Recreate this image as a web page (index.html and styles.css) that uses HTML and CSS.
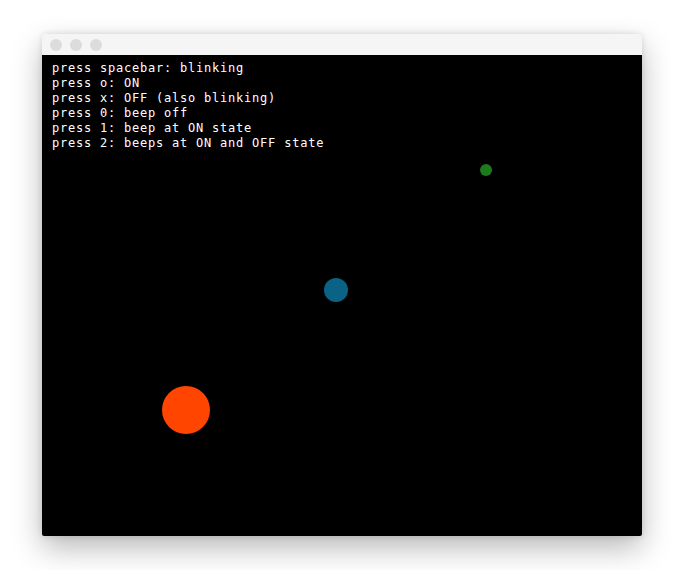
FILE: index.html
```html
<!DOCTYPE html>
<html>
<head>
<meta charset="utf-8">
<link rel="stylesheet" href="styles.css">
</head>
<body>
<div class="window">
  <div class="titlebar">
    <span class="dot"></span><span class="dot"></span><span class="dot"></span>
  </div>
  <div class="canvas">
    <div class="help">
      <div>press spacebar: blinking</div>
      <div>press o: ON</div>
      <div>press x: OFF (also blinking)</div>
      <div>press 0: beep off</div>
      <div>press 1: beep at ON state</div>
      <div>press 2: beeps at ON and OFF state</div>
    </div>
    <span class="ball ball-orange"></span>
    <span class="ball ball-blue"></span>
    <span class="ball ball-green"></span>
  </div>
</div>
</body>
</html>
```
FILE: styles.css
```css
html, body {
  margin: 0;
  background: #ffffff;
}
body {
  padding: 34px 42px;
}
.window {
  width: 600px;
  border-radius: 5px 5px 2px 2px;
  overflow: hidden;
  box-shadow: 0 12px 30px rgba(0, 0, 0, 0.28), 0 0 6px rgba(0, 0, 0, 0.12);
}
.titlebar {
  height: 21px;
  background: #f5f5f5;
  display: flex;
  align-items: center;
  gap: 8px;
  padding-left: 8px;
  box-sizing: border-box;
}
.dot {
  width: 12px;
  height: 12px;
  border-radius: 50%;
  background: #dcdcdc;
}
.canvas {
  position: relative;
  height: 481px;
  background: #000;
}
.help {
  padding: 6px 0 0 10px;
  color: #fff;
  font-family: "DejaVu Sans Mono", "Liberation Mono", monospace;
  font-size: 12px;
  letter-spacing: 0.78px;
  line-height: 15px;
}
.ball {
  position: absolute;
  border-radius: 50%;
}
.ball-orange {
  left: 120px;
  top: 331px;
  width: 48px;
  height: 48px;
  background: #ff4500;
}
.ball-blue {
  left: 282px;
  top: 223px;
  width: 24px;
  height: 24px;
  background: #0a6384;
}
.ball-green {
  left: 438px;
  top: 109px;
  width: 12px;
  height: 12px;
  background: #1d7a1d;
}
```
